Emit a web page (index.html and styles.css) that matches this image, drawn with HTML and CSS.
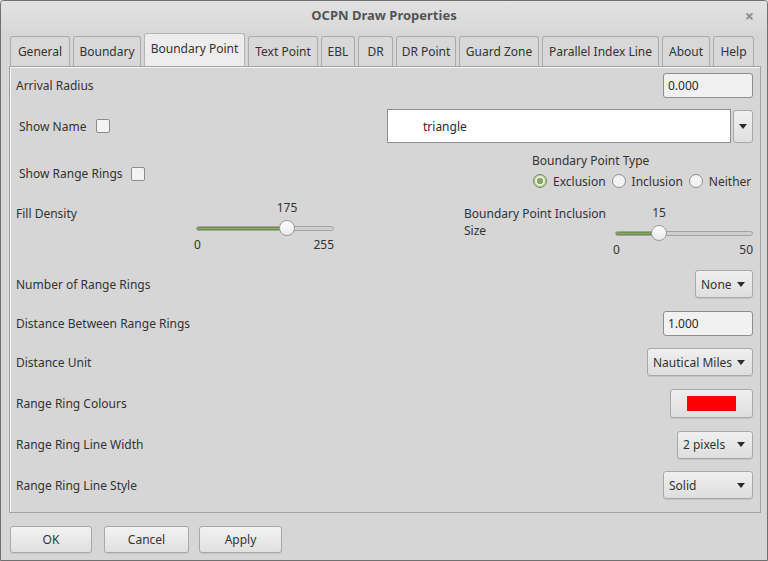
FILE: index.html
```html
<!DOCTYPE html>
<html>
<head>
<meta charset="utf-8">
<link rel="stylesheet" href="styles.css">
</head>
<body>
<div class="window">
  <div class="titlebar">
    <span class="title">OCPN Draw Properties</span>
    <span class="close">×</span>
  </div>
  <div class="tabs">
    <div class="tab w-general">General</div>
    <div class="tab w-boundary">Boundary</div>
    <div class="tab active w-bpoint">Boundary Point</div>
    <div class="tab w-tpoint">Text Point</div>
    <div class="tab w-ebl">EBL</div>
    <div class="tab w-dr">DR</div>
    <div class="tab w-drpoint">DR Point</div>
    <div class="tab w-guard">Guard Zone</div>
    <div class="tab w-pil">Parallel Index Line</div>
    <div class="tab w-about">About</div>
    <div class="tab w-help">Help</div>
  </div>
  <div class="panel">
    <div class="row r1">
      <span class="lbl">Arrival Radius</span>
      <div class="entry e-arrival">0.000</div>
    </div>
    <div class="row r2">
      <div class="chk-group"><span>Show Name</span><span class="checkbox"></span></div>
      <div class="combo">
        <div class="combo-entry">triangle</div>
        <div class="combo-btn"><span class="arrow"></span></div>
      </div>
    </div>
    <div class="row r3">
      <div class="chk-group"><span>Show Range Rings</span><span class="checkbox cb2"></span></div>
      <div class="bptype">
        <div class="bptype-title">Boundary Point Type</div>
        <div class="radios">
          <span class="radio checked"></span><span class="rlabel r-excl">Exclusion</span>
          <span class="radio"></span><span class="rlabel r-incl">Inclusion</span>
          <span class="radio"></span><span class="rlabel">Neither</span>
        </div>
      </div>
    </div>
    <div class="row r4">
      <div class="slider-group left-group">
        <span class="lbl fill-lbl">Fill Density</span>
        <div class="slider s-fill">
          <div class="val-line"><span class="val" style="left: 91px">175</span></div>
          <div class="track-area">
            <div class="track"><div class="fill" style="width: 91px"></div></div>
            <span class="thumb" style="left: 83px"></span>
          </div>
          <div class="minmax"><span>0</span><span>255</span></div>
        </div>
      </div>
      <div class="slider-group right-group">
        <span class="lbl incl-lbl">Boundary Point Inclusion<br>Size</span>
        <div class="slider s-incl">
          <div class="val-line"><span class="val" style="left: 44px">15</span></div>
          <div class="track-area">
            <div class="track"><div class="fill" style="width: 44px"></div></div>
            <span class="thumb" style="left: 36px"></span>
          </div>
          <div class="minmax"><span>0</span><span>50</span></div>
        </div>
      </div>
    </div>
    <div class="row r5">
      <span class="lbl">Number of Range Rings</span>
      <div class="dropdown d-none"><span>None</span><span class="arrow"></span></div>
    </div>
    <div class="row r6">
      <span class="lbl">Distance Between Range Rings</span>
      <div class="entry e-dist">1.000</div>
    </div>
    <div class="row r7">
      <span class="lbl">Distance Unit</span>
      <div class="dropdown d-unit"><span>Nautical Miles</span><span class="arrow"></span></div>
    </div>
    <div class="row r8">
      <span class="lbl">Range Ring Colours</span>
      <div class="colour-btn"><span class="swatch"></span></div>
    </div>
    <div class="row r9">
      <span class="lbl">Range Ring Line Width</span>
      <div class="dropdown d-width"><span>2 pixels</span><span class="arrow"></span></div>
    </div>
    <div class="row r10">
      <span class="lbl">Range Ring Line Style</span>
      <div class="dropdown d-style"><span>Solid</span><span class="arrow"></span></div>
    </div>
  </div>
  <div class="buttons">
    <div class="btn b-ok">OK</div>
    <div class="btn b-cancel">Cancel</div>
    <div class="btn b-apply">Apply</div>
  </div>
</div>
</body>
</html>
```

FILE: styles.css
```css
html, body {
  margin: 0;
  padding: 0;
  background: #d6d6d6;
}

body {
  font-family: "Noto Sans", "Open Sans", sans-serif;
  font-size: 12px;
  color: #333333;
}

.window {
  width: 768px;
  height: 561px;
  box-sizing: border-box;
  border: 1px solid #707070;
  border-radius: 4px 4px 0 0;
  background: #d6d6d6;
  overflow: hidden;
}

.titlebar {
  height: 32px;
  display: flex;
  align-items: center;
  justify-content: center;
  position: relative;
  background: linear-gradient(#e2e2e2, #d8d8d8);
}

.title {
  font-size: 13px;
  font-weight: bold;
  color: #545454;
  margin-top: -5px;
}

.close {
  position: absolute;
  right: 13px;
  top: 4px;
  font-size: 16px;
  color: #8a8a8a;
  font-weight: bold;
}

.tabs {
  height: 33px;
  display: flex;
  align-items: flex-end;
  gap: 3px;
  padding-left: 9px;
}

.tab {
  height: 30px;
  box-sizing: border-box;
  border: 1px solid #ababab;
  border-bottom: none;
  border-radius: 3px 3px 0 0;
  background: #d8d8d8;
  display: flex;
  align-items: center;
  justify-content: center;
  white-space: nowrap;
}

.tab.active {
  height: 33px;
  background: #ededed;
  border-color: #b5b5b5;
  padding-bottom: 3px;
}

.w-general { width: 60px; }
.w-boundary { width: 68px; }
.w-bpoint { width: 101px; }
.w-tpoint { width: 70px; }
.w-ebl { width: 34px; }
.w-dr { width: 35px; }
.w-drpoint { width: 60px; }
.w-guard { width: 80px; }
.w-pil { width: 117px; }
.w-about { width: 48px; }
.w-help { width: 41px; }

.panel {
  margin-left: 8px;
  width: 752px;
  height: 447px;
  box-sizing: border-box;
  border: 1px solid #a4a4a4;
  box-shadow: inset 1px 1px 0 #f4f4f4;
  padding: 0 7px 0 6px;
  display: flex;
  flex-direction: column;
}

.row {
  display: flex;
  align-items: center;
  justify-content: space-between;
  flex: none;
}

.r1 { height: 36px; }
.r2 { height: 46px; }
.r3 { height: 48px; align-items: flex-start; }
.r4 { height: 67px; align-items: flex-start; }
.r5 { height: 40px; }
.r6 { height: 38px; }
.r7 { height: 40px; }
.r8 { height: 43px; }
.r9 { height: 39px; }
.r10 { height: 42px; }

.lbl {
  white-space: nowrap;
}

.entry {
  height: 25px;
  box-sizing: border-box;
  border: 1px solid #8e8e8e;
  border-radius: 3px;
  background: #f1f1f1;
  padding-left: 4px;
  display: flex;
  align-items: center;
  color: #2a2a2a;
}

.e-arrival { width: 90px; }
.e-dist { width: 90px; }

.chk-group {
  display: flex;
  align-items: center;
  margin-left: 3px;
}

.r3 .chk-group {
  margin-top: 16px;
}

.checkbox {
  width: 14px;
  height: 14px;
  box-sizing: border-box;
  border: 1px solid #8d8d8d;
  border-radius: 2px;
  background: #f3f3f3;
  margin-left: 10px;
}

.cb2 { margin-left: 8px; }

.combo {
  display: flex;
  align-items: center;
  gap: 2px;
}

.combo-entry {
  width: 344px;
  height: 34px;
  box-sizing: border-box;
  border: 1px solid #8e8e8e;
  background: #ffffff;
  padding-left: 35px;
  display: flex;
  align-items: center;
  color: #2a2a2a;
}

.combo-btn {
  width: 20px;
  height: 33px;
  box-sizing: border-box;
  border: 1px solid #a8a8a8;
  border-radius: 3px;
  background: linear-gradient(#f0f0f0, #e0e0e0);
  display: flex;
  align-items: center;
  justify-content: center;
  margin-top: 1px;
}

.arrow {
  width: 0;
  height: 0;
  border-left: 4.5px solid transparent;
  border-right: 4.5px solid transparent;
  border-top: 5px solid #2c2c2c;
}

.bptype {
  width: 221px;
  margin-top: 2px;
  display: flex;
  flex-direction: column;
}

.bptype-title {
  height: 20px;
  line-height: 20px;
}

.radios {
  height: 20px;
  display: flex;
  align-items: center;
  padding-left: 1px;
}

.radio {
  width: 14px;
  height: 14px;
  box-sizing: border-box;
  border: 1px solid #8f8f8f;
  border-radius: 50%;
  background: #f3f3f3;
  margin-right: 6px;
  flex: none;
}

.radio.checked {
  border: 1px solid #6e8f4d;
  background: radial-gradient(circle, #86a862 0, #86a862 3px, #e9f0e1 3.5px, #e9f0e1 100%);
  box-shadow: inset 0 0 0 1px #a9c48c;
}

.rlabel {
  white-space: nowrap;
}

.r-excl { margin-right: 6px; }
.r-incl { margin-right: 6px; }

.slider-group {
  display: flex;
}

.fill-lbl {
  margin-top: 8px;
  width: 180px;
}

.s-fill {
  margin-top: 3px;
}

.incl-lbl {
  margin-top: 8px;
  line-height: 17px;
  width: 151px;
}

.s-incl {
  margin-top: 8px;
}

.slider {
  width: 138px;
  display: flex;
  flex-direction: column;
}

.val-line {
  height: 16px;
  line-height: 16px;
  position: relative;
}

.val {
  position: absolute;
  top: 0;
  transform: translateX(-50%);
}

.track-area {
  height: 24px;
  position: relative;
  display: flex;
  align-items: center;
}

.track {
  width: 138px;
  height: 5px;
  box-sizing: border-box;
  border: 1px solid #a2a2a2;
  border-radius: 3px;
  background: #cfcfcf;
  overflow: hidden;
}

.fill {
  height: 100%;
  background: #8aaa66;
  box-shadow: inset 0 0 0 1px #6f8f4e;
}

.thumb {
  position: absolute;
  top: 4px;
  width: 16px;
  height: 16px;
  box-sizing: border-box;
  border: 1px solid #9a9a9a;
  border-radius: 50%;
  background: linear-gradient(#ffffff, #e9e9e9);
}

.minmax {
  margin-top: -3px;
  margin-left: -2px;
  height: 16px;
  line-height: 16px;
  display: flex;
  justify-content: space-between;
}

.dropdown {
  height: 28px;
  box-sizing: border-box;
  border: 1px solid #a8a8a8;
  border-radius: 3px;
  background: linear-gradient(#f0f0f0, #dedede);
  box-shadow: 0 1px 0 rgba(0, 0, 0, 0.08);
  display: flex;
  align-items: center;
  justify-content: space-between;
  padding: 0 7px 0 5px;
  white-space: nowrap;
}

.d-none { width: 58px; }
.d-unit { width: 106px; }
.d-width { width: 76px; }
.d-style { width: 90px; }

.colour-btn {
  width: 83px;
  height: 29px;
  box-sizing: border-box;
  border: 1px solid #a8a8a8;
  border-radius: 3px;
  background: linear-gradient(#f0f0f0, #dedede);
  box-shadow: 0 1px 0 rgba(0, 0, 0, 0.08);
  display: flex;
  align-items: center;
  justify-content: center;
}

.swatch {
  width: 49px;
  height: 15px;
  background: #ff0000;
}

.buttons {
  display: flex;
  margin-top: 13px;
  padding-left: 9px;
}

.btn {
  height: 27px;
  box-sizing: border-box;
  border: 1px solid #a8a8a8;
  border-radius: 3px;
  background: linear-gradient(#f2f2f2, #e0e0e0);
  box-shadow: 0 1px 0 rgba(0, 0, 0, 0.08);
  display: flex;
  align-items: center;
  justify-content: center;
}

.b-ok { width: 82px; }
.b-cancel { width: 85px; margin-left: 12px; }
.b-apply { width: 83px; margin-left: 10px; }
```
